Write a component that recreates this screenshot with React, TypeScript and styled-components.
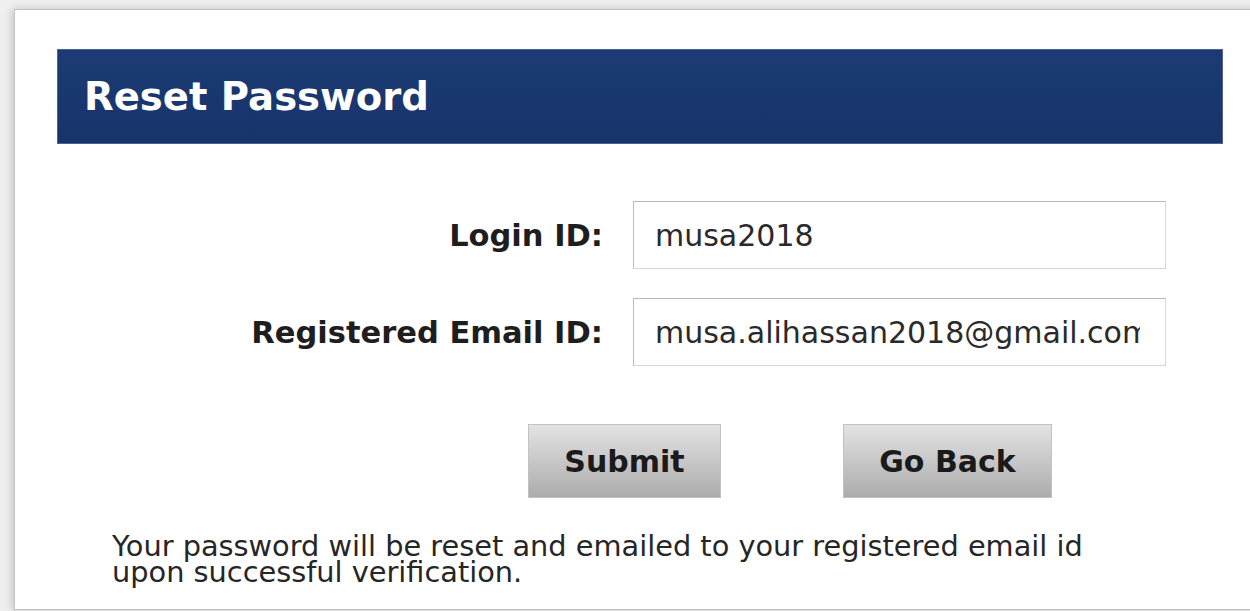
import styled, { createGlobalStyle } from 'styled-components'

const GlobalStyle = createGlobalStyle`
  html, body {
    margin: 0;
    padding: 0;
    background: #efefef;
    overflow: hidden;
  }
  body {
    font-family: 'DejaVu Sans', Verdana, sans-serif;
  }
`

const Page = styled.div`
  padding: 9px 0 0 14px;
  height: 611px;
  box-sizing: border-box;
`

const Card = styled.div`
  width: 1260px;
  height: 601px;
  box-sizing: border-box;
  background: #fff;
  border: 1px solid #c4c4c4;
  box-shadow: -2px 0 8px rgba(0, 0, 0, 0.18);
  padding: 39px 0 0 42px;
`

const Header = styled.div`
  width: 1166px;
  height: 95px;
  box-sizing: border-box;
  display: flex;
  align-items: center;
  padding-left: 26px;
  background: linear-gradient(#1c3b74, #17346a);
  border: 1px solid #4a6290;
`

const Title = styled.h1`
  margin: 0;
  color: #fff;
  font-size: 38.6px;
  font-weight: bold;
`

const Form = styled.div`
  display: grid;
  grid-template-columns: 546px 533px;
  column-gap: 30px;
  row-gap: 29px;
  align-items: center;
  margin-top: 57px;
`

const Label = styled.label`
  text-align: right;
  font-size: 30.5px;
  font-weight: bold;
  color: #1e1e1e;
`

const Field = styled.input`
  height: 68px;
  box-sizing: border-box;
  padding: 0 25px 0 21px;
  border: 1px solid #d6d6d6;
  border-top-color: #b8b8b8;
  border-left-color: #bcbcbc;
  font-family: inherit;
  font-size: 30px;
  color: #2a2a2a;
  background: #fff;
  outline: none;
`

const Actions = styled.div`
  display: flex;
  gap: 122px;
  margin: 58px 0 0 471px;
`

const Button = styled.button<{ w: number }>`
  width: ${({ w }) => w}px;
  height: 74px;
  padding: 0;
  border: 1px solid #c2c2c2;
  background: linear-gradient(#e3e3e3, #acacac);
  font-family: inherit;
  font-size: 30px;
  font-weight: bold;
  color: #1a1a1a;
`

const Note = styled.p`
  margin: 35px 0 0 55px;
  font-size: 28.8px;
  line-height: 26px;
  color: #262626;
`

export default function App() {
  return (
    <Page>
      <GlobalStyle />
      <Card>
        <Header>
          <Title>Reset Password</Title>
        </Header>
        <Form>
          <Label>Login ID:</Label>
          <Field readOnly value="musa2018" />
          <Label>Registered Email ID:</Label>
          <Field readOnly value="musa.alihassan2018@gmail.com" />
        </Form>
        <Actions>
          <Button w={193}>Submit</Button>
          <Button w={209}>Go Back</Button>
        </Actions>
        <Note>
          Your password will be reset and emailed to your registered email id
          <br />
          upon successful verification.
        </Note>
      </Card>
    </Page>
  )
}
